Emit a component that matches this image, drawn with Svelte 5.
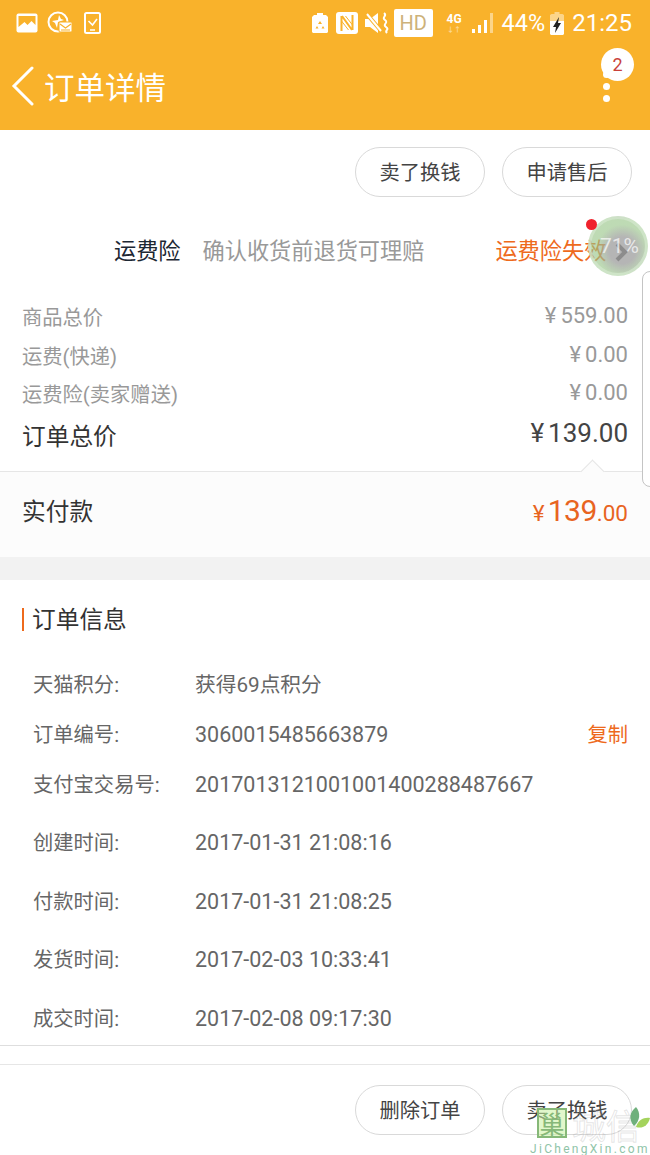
<script>
	const prices = [
		{ label: '商品总价', value: '559.00' },
		{ label: '运费(快递)', value: '0.00' },
		{ label: '运费险(卖家赠送)', value: '0.00' }
	];

	// h = distance to the next row, the rows are not evenly spaced
	const info = [
		{ label: '天猫积分:', value: '获得69点积分', h: 50, text: true },
		{ label: '订单编号:', value: '3060015485663879', h: 50, copy: true },
		{ label: '支付宝交易号:', value: '2017013121001001400288487667', h: 58 },
		{ label: '创建时间:', value: '2017-01-31 21:08:16', h: 59 },
		{ label: '付款时间:', value: '2017-01-31 21:08:25', h: 58 },
		{ label: '发货时间:', value: '2017-02-03 10:33:41', h: 59 },
		{ label: '成交时间:', value: '2017-02-08 09:17:30', h: 30 }
	];
</script>

<div class="page">
	<header class="head">
		<div class="status">
			<div class="status-left">
				<svg width="22" height="20" viewBox="0 0 22 20">
					<rect x="0.5" y="0.5" width="21" height="19" rx="2" fill="#fff" />
					<path d="M2.5 3h17v9l-4-4-4 4-3-3-6 5z" fill="#f9b22b" />
				</svg>
				<svg width="26" height="24" viewBox="0 0 26 24">
					<circle cx="11" cy="11" r="9.5" fill="none" stroke="#fff" stroke-width="2" />
					<path d="M5 10l6-1 1-5 2 4 3 1-6 2-1 6-2-5z" fill="#fff" />
					<rect x="12" y="11" width="13" height="10" rx="1" fill="#fff" stroke="#f9b22b" />
					<path d="M13 13l5.500 4 5.500-4M14 19h9" fill="none" stroke="#f9b22b" stroke-width="1.200" />
				</svg>
				<svg class="clip" width="17" height="22" viewBox="0 0 17 22">
					<rect x="1" y="1" width="15" height="20" rx="1.500" fill="none" stroke="#fff" stroke-width="2" />
					<path d="M4.500 9l4 4 4.500-6M6 18h5" fill="none" stroke="#fff" stroke-width="1.600" />
				</svg>
			</div>
			<div class="status-right">
				<svg width="16" height="22" viewBox="0 0 16 22">
					<path d="M5 1h6v2h3l2 2v15l-1 1H1l-1-1V5l2-2h3z" fill="#fff" />
					<path d="M8 9l2 3H6zM5 14l-1.500 2.500h3zM11 14l1.500 2.500h-3z" fill="#f9b22b" />
				</svg>
				<svg class="nfc" width="22" height="22" viewBox="0 0 22 22">
					<rect width="22" height="22" rx="3" fill="#fff" />
					<path d="M5.500 19V4M16.500 18V3M6 4l10 14" fill="none" stroke="#f9b22b" stroke-width="2" />
					<path d="M9.500 4l7 9M5.500 9l7 9" fill="none" stroke="#f9b22b" stroke-width="1" />
				</svg>
				<svg class="mute" width="25" height="22" viewBox="0 0 25 22">
					<path d="M0 7h5l8-6v20l-8-6H0z" fill="#fff" />
					<path d="M1 1l16 19" stroke="#f9b22b" stroke-width="4" />
					<path d="M2 2l14 17" stroke="#fff" stroke-width="2" />
					<path d="M19 1c4 3-3 4 1 7s-3 4 1 7-2 3 1 6" fill="none" stroke="#fff" stroke-width="2" />
				</svg>
				<span class="hd">HD</span>
				<span class="net">4G<i>↓↑</i></span>
				<svg class="signal" width="21" height="20" viewBox="0 0 21 20">
					<path d="M0 20h3v-4H0zM6 20h3v-8H6zM12 20h3V7h-3z" fill="#fff" />
					<path d="M18 20h3V0h-3z" fill="#fff" opacity="0.45" />
				</svg>
				<span class="pct">44%</span>
				<svg class="batt" width="14" height="23" viewBox="0 0 14 23">
					<path d="M4.500 0h5v2h3l1.500 1v6H0V3l1.500-1h3z" fill="#fff" opacity="0.45" />
					<path d="M0 9h14v13l-1 1H1l-1-1z" fill="#fff" />
					<path d="M9 5l-6 10h3l-1 6 6-10H8z" fill="#222" />
				</svg>
				<span class="time">21:25</span>
			</div>
		</div>
		<div class="titlebar">
			<svg class="back" width="24" height="40" viewBox="0 0 24 40">
				<path d="M21 2L3 20l18 18" fill="none" stroke="#fff" stroke-width="3" stroke-linecap="round" />
			</svg>
			<h1>订单详情</h1>
			<div class="more">
				<i></i>
				<i></i>
				<i></i>
				<span class="badge">2</span>
			</div>
		</div>
	</header>

	<div class="actions">
		<button type="button">卖了换钱</button>
		<button type="button">申请售后</button>
	</div>

	<div class="insure">
		<b>运费险</b>
		<span class="hint">确认收货前退货可理赔</span>
		<span class="lost">运费险失效</span>
	</div>

	<div class="prices">
		{#each prices as p}
			<div class="price">
				<span>{p.label}</span>
				<span class="num"><em>¥</em>{p.value}</span>
			</div>
		{/each}
		<div class="total">
			<span>订单总价</span>
			<span class="num"><em>¥</em>139.00</span>
		</div>
	</div>

	<div class="paid">
		<span class="notch"></span>
		<span>实付款</span>
		<span class="amount"><small>¥</small><strong>139</strong><small>.00</small></span>
	</div>

	<div class="gap"></div>

	<section class="info">
		<h2>订单信息</h2>
		<div class="rows">
			{#each info as row}
				<div class="row" style="height: {row.h}px">
					<span class="key">{row.label}</span>
					<span class="val" class:text={row.text}>{row.value}</span>
					{#if row.copy}<span class="copy">复制</span>{/if}
				</div>
			{/each}
		</div>
	</section>

	<footer class="foot">
		<button type="button">删除订单</button>
		<button type="button">卖了换钱</button>
	</footer>

	<div class="handle"></div>
	<div class="ball">
		<span class="dot"></span>
		<svg width="14" height="20" viewBox="0 0 14 20">
			<path d="M2 2l8 8-8 8" fill="none" stroke="#8c8c8c" stroke-width="4" />
		</svg>
		<span class="ball-text">71%</span>
	</div>
	<div class="mark">
		<span class="mark-box">巢</span>
		<span class="mark-name">城信</span>
		<svg width="22" height="32" viewBox="0 0 22 32">
			<path d="M8 0c-6 5-8 12-2 19 6-5 7-13 2-19z" fill="#6fb07c" />
			<path d="M22 11c-6-1-12 2-14 9 6 2 12-1 14-9z" fill="#a4d35c" />
		</svg>
		<span class="mark-url">JiChengXin.com</span>
	</div>
</div>

<style>
	:global(body) {
		margin: 0;
		background: #fff;
	}

	.page {
		position: relative;
		width: 650px;
		height: 1155px;
		overflow: hidden;
		background: #fff;
		font-family: Roboto, 'Noto Sans CJK SC', sans-serif;
		color: #333;
	}

	.head {
		height: 130px;
		background: #f9b22b;
		color: #fff;
	}

	.status {
		display: flex;
		justify-content: space-between;
		align-items: center;
		height: 46px;
		padding: 0 18px 0 16px;
	}

	.status-left {
		display: flex;
		align-items: center;
		gap: 9px;
	}

	.clip {
		margin-left: 2px;
	}

	.status-right {
		display: flex;
		align-items: center;
	}

	.nfc {
		margin-left: 8px;
	}

	.mute {
		margin-left: 7px;
	}

	.hd {
		margin-left: 4px;
		width: 39px;
		height: 28px;
		border-radius: 2px;
		background: #fff;
		color: #cdb27a;
		font-size: 20px;
		line-height: 28px;
		text-align: center;
	}

	.net {
		margin-left: 13px;
		width: 17px;
		font-size: 12px;
		font-weight: 700;
		line-height: 13px;
		text-align: center;
	}

	.net i {
		display: block;
		font-size: 7px;
		font-style: normal;
		line-height: 8px;
		opacity: 0.5;
	}

	.signal {
		margin-left: 9px;
	}

	.pct {
		margin-left: 9px;
		font-size: 23.500px;
	}

	.batt {
		margin-left: 5px;
	}

	.time {
		margin-left: 8px;
		font-size: 24px;
	}

	.titlebar {
		position: relative;
		display: flex;
		align-items: center;
		height: 84px;
		padding: 0 0 4px 11px;
		box-sizing: border-box;
	}

	.back {
		margin-right: 9px;
	}

	h1 {
		margin: 0;
		font-size: 30.500px;
		font-weight: 400;
	}

	.more {
		position: absolute;
		left: 603px;
		top: 25px;
		display: flex;
		flex-direction: column;
		gap: 5px;
	}

	.more i {
		width: 7px;
		height: 7px;
		border-radius: 50%;
		background: #fff;
	}

	.badge {
		position: absolute;
		left: -2px;
		top: -23px;
		width: 33px;
		height: 33px;
		border-radius: 50%;
		background: #fff;
		color: #c9413a;
		font-size: 18px;
		line-height: 33px;
		text-align: center;
	}

	.actions,
	.foot {
		display: flex;
		justify-content: flex-end;
		gap: 17px;
		padding-right: 18px;
	}

	.actions {
		padding-top: 17px;
	}

	button {
		width: 130px;
		height: 50px;
		padding: 0 0 2px;
		border: 1px solid #d9d9d9;
		border-radius: 25px;
		background: #fff;
		color: #444;
		font: 400 20.300px 'Noto Sans CJK SC', sans-serif;
	}

	.insure {
		display: flex;
		align-items: center;
		height: 50px;
		margin-top: 27px;
		padding-left: 114px;
		font-size: 22.200px;
	}

	.insure b {
		font-weight: 400;
		color: #1c2733;
	}

	.hint {
		margin-left: 22px;
		color: #999;
	}

	.lost {
		margin-left: 71px;
		color: #ee6a1c;
	}

	.prices {
		padding: 25px 22px 0;
	}

	.price {
		display: flex;
		justify-content: space-between;
		align-items: center;
		height: 38.500px;
		font-size: 20.300px;
		line-height: 30px;
		color: #999;
	}

	.num em {
		margin-right: 4px;
		font-style: normal;
	}

	.price .num {
		margin-bottom: 4px;
		font-size: 22px;
	}

	.total {
		display: flex;
		justify-content: space-between;
		align-items: center;
		height: 44px;
		font-size: 23.700px;
		line-height: 34px;
		color: #333;
	}

	.total .num {
		margin-bottom: 8px;
		font-size: 26px;
		color: #444;
	}

	.paid {
		position: relative;
		display: flex;
		justify-content: space-between;
		align-items: center;
		box-sizing: border-box;
		height: 86px;
		margin-top: 12.500px;
		padding: 0 22px 6px;
		border-top: 1px solid #e6e6e6;
		background: #fcfcfc;
		font-size: 23.700px;
		line-height: 36px;
		color: #333;
	}

	.notch {
		position: absolute;
		right: 49px;
		top: -9px;
		width: 16px;
		height: 16px;
		border-top: 1px solid #e6e6e6;
		border-left: 1px solid #e6e6e6;
		background: #fcfcfc;
		transform: rotate(45deg);
	}

	.amount {
		color: #e8641f;
	}

	.amount small {
		font-size: 22.500px;
	}

	.amount strong {
		margin-left: 3px;
		font-size: 30px;
		font-weight: 400;
		letter-spacing: -0.500px;
	}

	.gap {
		height: 22.500px;
		background: #f2f2f2;
	}

	.info {
		height: 466px;
		border-bottom: 1px solid #dedede;
		box-sizing: border-box;
	}

	h2 {
		margin: 28px 0 0 22px;
		padding-left: 8px;
		border-left: 2px solid #ee6a1c;
		height: 23px;
		font-size: 23.700px;
		font-weight: 400;
		line-height: 25px;
		color: #333;
	}

	.info {
		padding-top: 0.100px;
	}

	.rows {
		margin-top: 39px;
	}

	.row {
		display: flex;
		align-items: flex-start;
		padding: 0 22px 0 33px;
		font-size: 20.300px;
		line-height: 30px;
	}

	.key {
		width: 162px;
		color: #666;
		flex: none;
	}

	.val {
		color: #666;
		font-size: 21.500px;
	}

	.val.text {
		font-size: 20.700px;
	}

	.copy {
		margin-left: auto;
		color: #ee6a1c;
	}

	.foot {
		margin-top: 18px;
		padding-top: 20px;
		border-top: 1px solid #e6e6e6;
	}

	.handle {
		position: absolute;
		left: 642px;
		top: 271px;
		width: 15px;
		height: 214px;
		border: 1px solid #c4c4c4;
		border-radius: 8px;
		background: #fff;
	}

	.ball {
		position: absolute;
		left: 588px;
		top: 216px;
		display: flex;
		align-items: center;
		justify-content: center;
		box-sizing: border-box;
		width: 60px;
		height: 60px;
		border: 3px solid rgba(214, 232, 208, 0.7);
		border-radius: 50%;
		background: radial-gradient(circle at 58% 58%, rgba(168, 168, 168, 0.85) 0 30%, rgba(150, 196, 134, 0.62) 58%);
	}

	.ball svg {
		position: relative;
		left: 4px;
		top: 6px;
	}

	.dot {
		position: absolute;
		left: -5px;
		top: 0;
		width: 11px;
		height: 11px;
		border-radius: 50%;
		background: #f0222c;
	}

	.ball-text {
		position: absolute;
		left: 9px;
		top: 15px;
		color: rgba(255, 255, 255, 0.7);
		font-size: 21px;
	}

	.mark {
		position: absolute;
		left: 532px;
		top: 1105px;
		width: 118px;
		height: 50px;
	}

	.mark-box {
		position: absolute;
		left: 5px;
		top: 3px;
		box-sizing: border-box;
		width: 30px;
		height: 30px;
		border: 2px solid #86b878;
		background: rgba(200, 240, 160, 0.55);
		color: #86b878;
		font: 25px/26px 'Noto Sans CJK SC', sans-serif;
		text-align: center;
	}

	.mark-name {
		position: absolute;
		left: 40px;
		top: 0;
		color: transparent;
		-webkit-text-stroke: 1px rgba(170, 170, 170, 0.3);
		font: 34px/40px 'Noto Sans CJK SC', sans-serif;
	}

	.mark svg {
		position: absolute;
		left: 96px;
		top: 2px;
	}

	.mark-url {
		position: absolute;
		left: -2px;
		top: 37px;
		color: #8fc4a8;
		font: 12px/14px Roboto, sans-serif;
		letter-spacing: 2.300px;
		white-space: nowrap;
	}
</style>
